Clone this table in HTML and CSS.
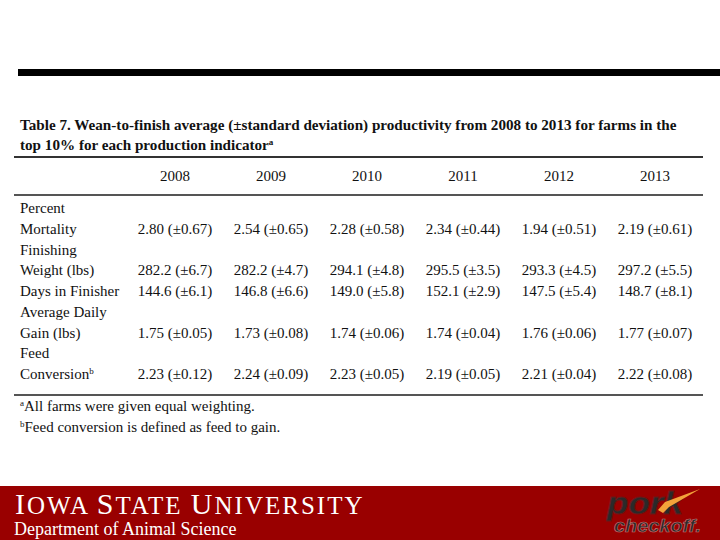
FILE: index.html
```html
<!DOCTYPE html>
<html>
<head>
<meta charset="utf-8">
<link rel="stylesheet" href="styles.css">
</head>
<body>
<div class="slide">
  <div class="topbar"></div>
  <div class="content">
    <div class="caption">Table 7. Wean-to-finish average (±standard deviation) productivity from 2008 to 2013 for farms in the<br>top 10% for each production indicator<sup>a</sup></div>
    <table class="data">
      <colgroup>
        <col class="c-label"><col class="c-val"><col class="c-val"><col class="c-val"><col class="c-val"><col class="c-val"><col class="c-val">
      </colgroup>
      <thead>
        <tr><th></th><th>2008</th><th>2009</th><th>2010</th><th>2011</th><th>2012</th><th>2013</th></tr>
      </thead>
      <tbody>
        <tr class="first"><td class="label">Percent<br>Mortality</td><td>2.80 (±0.67)</td><td>2.54 (±0.65)</td><td>2.28 (±0.58)</td><td>2.34 (±0.44)</td><td>1.94 (±0.51)</td><td>2.19 (±0.61)</td></tr>
        <tr><td class="label">Finishing<br>Weight (lbs)</td><td>282.2 (±6.7)</td><td>282.2 (±4.7)</td><td>294.1 (±4.8)</td><td>295.5 (±3.5)</td><td>293.3 (±4.5)</td><td>297.2 (±5.5)</td></tr>
        <tr><td class="label">Days in Finisher</td><td>144.6 (±6.1)</td><td>146.8 (±6.6)</td><td>149.0 (±5.8)</td><td>152.1 (±2.9)</td><td>147.5 (±5.4)</td><td>148.7 (±8.1)</td></tr>
        <tr><td class="label">Average Daily<br>Gain (lbs)</td><td>1.75 (±0.05)</td><td>1.73 (±0.08)</td><td>1.74 (±0.06)</td><td>1.74 (±0.04)</td><td>1.76 (±0.06)</td><td>1.77 (±0.07)</td></tr>
        <tr class="last"><td class="label">Feed<br>Conversion<sup>b</sup></td><td>2.23 (±0.12)</td><td>2.24 (±0.09)</td><td>2.23 (±0.05)</td><td>2.19 (±0.05)</td><td>2.21 (±0.04)</td><td>2.22 (±0.08)</td></tr>
      </tbody>
    </table>
    <div class="notes">
      <div><sup>a</sup>All farms were given equal weighting.</div>
      <div><sup>b</sup>Feed conversion is defined as feed to gain.</div>
    </div>
  </div>
  <footer class="footer">
    <div class="isu">
      <div class="isu-name"><span class="cap">I</span>OWA <span class="cap">S</span>TATE <span class="cap">U</span>NIVERSITY</div>
      <div class="isu-dept">Department of Animal Science</div>
    </div>
    <svg class="logo" width="100" height="54" viewBox="0 0 100 54">
      <text x="1" y="28" class="pork" textLength="76" lengthAdjust="spacingAndGlyphs">pork</text>
      <polygon points="52,24 59,16 94,3 63,21 57,27" fill="#f4a23a"/>
      <text x="8" y="46" class="checkoff" textLength="87" lengthAdjust="spacingAndGlyphs">checkoff.</text>
    </svg>
  </footer>
</div>
</body>
</html>
```

FILE: styles.css
```css
html, body {
  margin: 0;
  padding: 0;
  background: #ffffff;
}

.slide {
  width: 720px;
  height: 540px;
  display: flex;
  flex-direction: column;
  font-family: "Liberation Serif", "Times New Roman", serif;
  color: #111;
  overflow: hidden;
}

.topbar {
  margin: 69px 0 0 18px;
  height: 7px;
  background: #000;
}

.content {
  margin: 39px 17px 0 14px;
}

.caption {
  font-weight: bold;
  font-size: 15.15px;
  line-height: 20px;
  white-space: nowrap;
  padding: 0 0 1px 6px;
  border-bottom: 2px solid #333;
}

sup {
  font-size: 9px;
  line-height: 0;
  vertical-align: 5px;
}

.data {
  width: 689px;
  border-collapse: collapse;
  table-layout: fixed;
  font-size: 15px;
  line-height: 20.75px;
}

.c-label { width: 113px; }
.c-val { width: 96px; }

.data th {
  font-weight: normal;
  height: 36px;
  padding: 0;
  text-align: center;
  vertical-align: middle;
  border-bottom: 2px solid #555;
}

.data td {
  padding: 0;
  text-align: center;
  vertical-align: bottom;
  white-space: nowrap;
}

.data td.label {
  text-align: left;
  padding-left: 6px;
}

.data tr.first td { padding-top: 2px; }
.data tr.last td {
  padding-bottom: 9px;
  border-bottom: 2px solid #555;
}

.notes {
  font-size: 15px;
  line-height: 20.75px;
  padding-left: 6px;
}

.footer {
  margin-top: auto;
  height: 54px;
  background: #990000;
  display: flex;
  justify-content: space-between;
  align-items: flex-start;
  padding: 0 14px 0 15px;
  color: #fff;
}

.isu {
  padding-top: 3px;
}

.isu-name {
  font-size: 25px;
  line-height: 29px;
  letter-spacing: 2px;
}

.isu-name .cap {
  font-size: 30px;
}

.isu-dept {
  font-size: 18px;
  line-height: 18px;
  margin-left: -1px;
}

.logo .pork {
  font-family: "Liberation Sans", Arial, sans-serif;
  font-weight: bold;
  font-style: italic;
  font-size: 32px;
  fill: #2a2a2a;
  stroke: #6a1a1a;
  stroke-width: 0.8;
}

.logo .checkoff {
  font-family: "Liberation Sans", Arial, sans-serif;
  font-weight: bold;
  font-style: italic;
  font-size: 18px;
  fill: #2a2a2a;
  stroke: #c77;
  stroke-width: 0.6;
}
```
